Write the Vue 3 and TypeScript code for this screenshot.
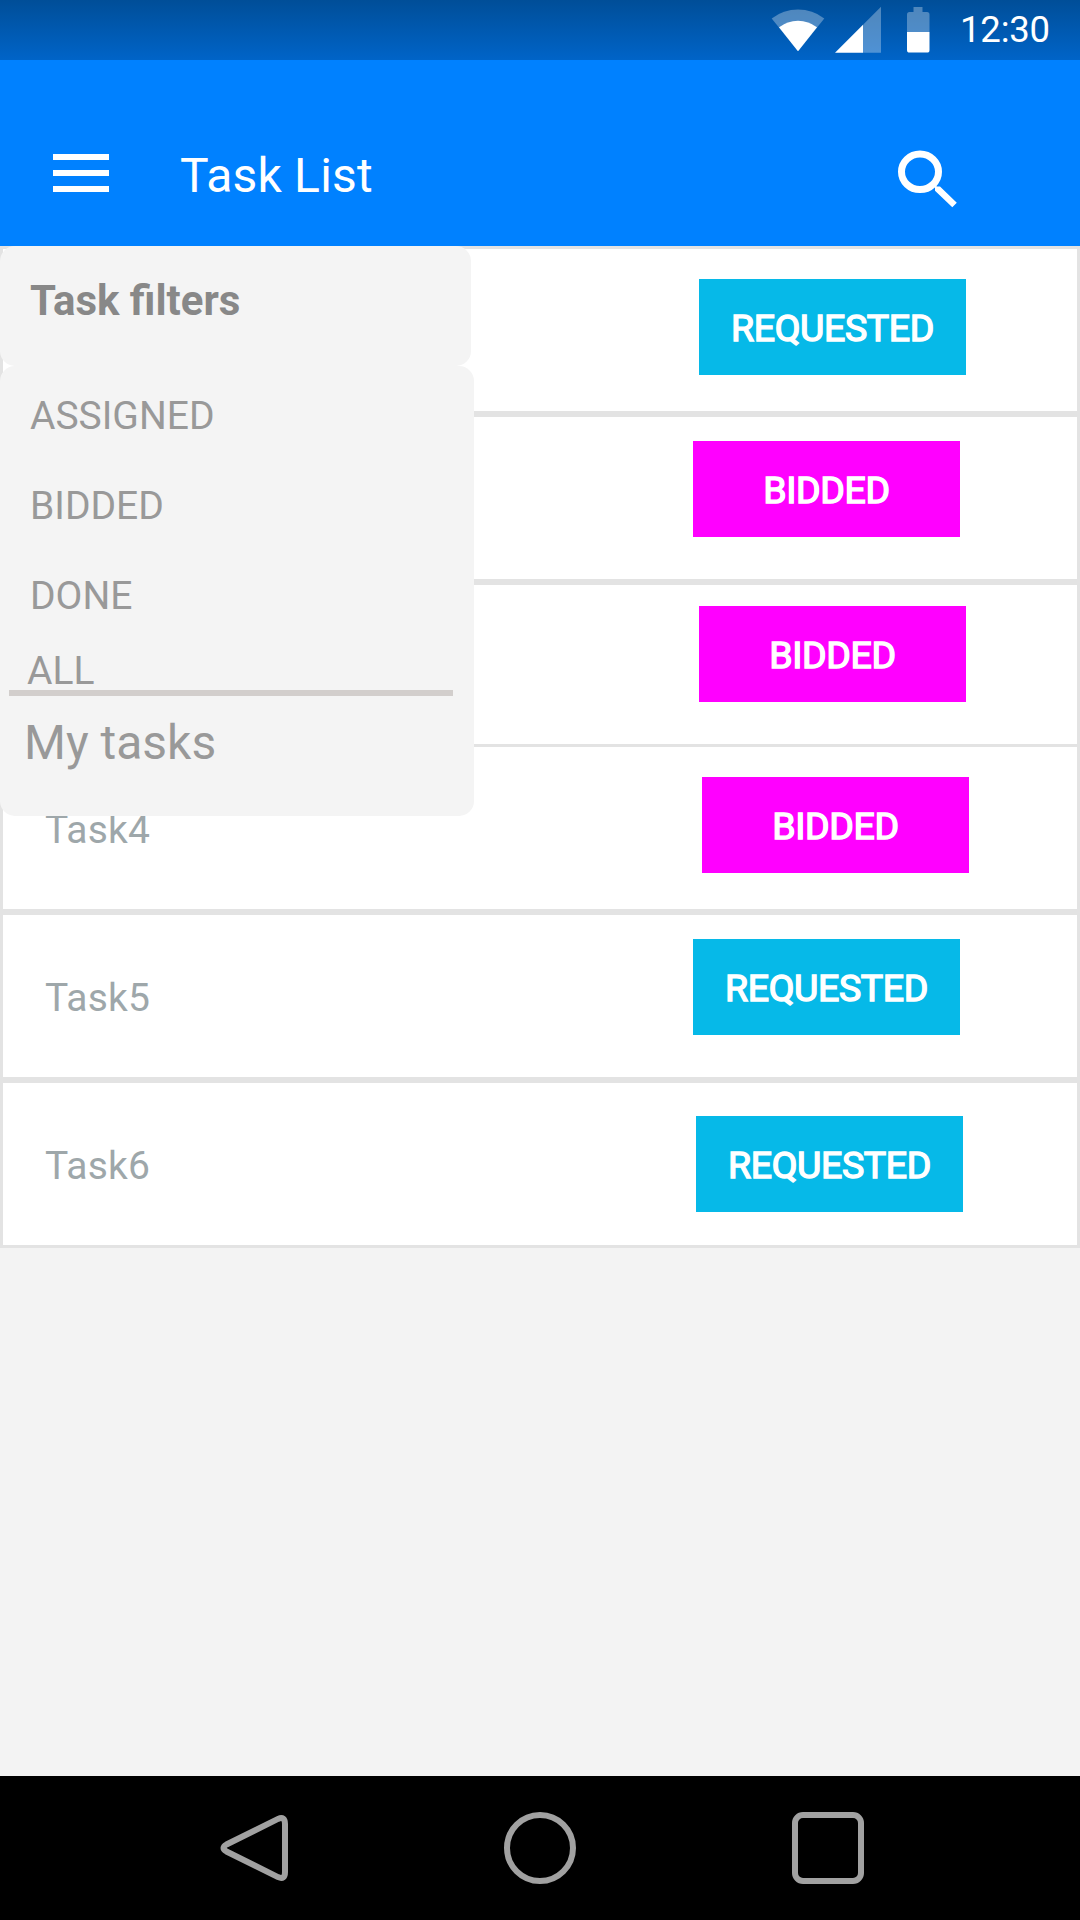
<script setup lang="ts">
type Status = 'REQUESTED' | 'BIDDED'

interface Task {
  id: number
  name?: string
  status: Status
  top: number
  right: number
}

// The first three rows sit under the open filter panel and carry no label.
const tasks: Task[] = [
  { id: 1, status: 'REQUESTED', top: 30, right: 111 },
  { id: 2, status: 'BIDDED', top: 24, right: 117 },
  { id: 3, status: 'BIDDED', top: 21, right: 111 },
  { id: 4, name: 'Task4', status: 'BIDDED', top: 30, right: 108 },
  { id: 5, name: 'Task5', status: 'REQUESTED', top: 24, right: 117 },
  { id: 6, name: 'Task6', status: 'REQUESTED', top: 33, right: 114 },
]

const filters: string[] = ['ASSIGNED', 'BIDDED', 'DONE']
</script>

<template>
  <div class="screen">
    <div class="status-bar">
      <svg class="status-icons" width="160" height="48" viewBox="771 6 160 48">
        <path d="M771.7 18.4 Q783.5 9.6 798 9.6 Q812.500 9.600 824.300 18.400 L798 51.300 Z" fill="#fff" fill-opacity=".31" />
        <path d="M779 27.300 Q787.500 20.700 798 20.700 Q808.500 20.700 817 27.300 L798 51.300 Z" fill="#fff" />
        <path d="M863 24.800 L881 6.800 V52.800 H863 Z" fill="#fff" fill-opacity=".31" />
        <path d="M835 52.800 L863 24.800 V52.800 Z" fill="#fff" />
        <path d="M907 32 V14.500 Q907 12 909.500 12 H913.500 V7 H922.500 V12 H927 Q929.500 12 929.500 14.500 V32 Z" fill="#fff" fill-opacity=".31" />
        <path d="M907 32 H929.500 V50 Q929.500 52.600 927 52.600 H909.500 Q907 52.600 907 50 Z" fill="#fff" />
      </svg>
      <span class="clock">12:30</span>
    </div>

    <header class="app-bar">
      <button class="icon-button menu-button" aria-label="Menu">
        <svg width="56" height="38" viewBox="0 0 56 38" fill="#fff">
          <rect width="56" height="6" />
          <rect y="16" width="56" height="6" />
          <rect y="32" width="56" height="6" />
        </svg>
      </button>
      <h1 class="title">Task List</h1>
      <button class="icon-button search-button" aria-label="Search">
        <svg width="60" height="58" viewBox="897 150 60 58">
          <ellipse cx="920" cy="171.800" rx="18.500" ry="17.800" fill="none" stroke="#fff" stroke-width="7" />
          <path d="M932.500 187 L936 184 L936.600 186.600 L940 186.600 L956.800 202.700 L952.300 207.200 L935 190.800 V187 Z" fill="#fff" />
        </svg>
      </button>
    </header>

    <main class="content">
      <ul class="tasks">
        <li v-for="task in tasks" :key="task.id" class="task">
          <span class="task-name">{{ task.name }}</span>
          <span
            class="badge"
            :class="task.status.toLowerCase()"
            :style="{ marginTop: `${task.top}px`, marginRight: `${task.right}px` }"
          >{{ task.status }}</span>
        </li>
      </ul>

      <aside class="drawer">
        <div class="drawer-head">Task filters</div>
        <div class="drawer-body">
          <div v-for="filter in filters" :key="filter" class="filter">{{ filter }}</div>
          <div class="filter-all">ALL</div>
          <div class="rule"></div>
          <div class="my-tasks">My tasks</div>
        </div>
      </aside>
    </main>

    <nav class="nav-bar">
      <div class="nav-item">
        <svg width="72" height="72" viewBox="0 0 72 72" class="nav-icon">
          <path d="M62 6.900 Q69 4 69 12 V60 Q69 68 62 65.100 L10.500 39.500 Q4.500 36 10.500 32.500 Z" />
        </svg>
      </div>
      <div class="nav-item">
        <svg width="72" height="72" viewBox="0 0 72 72" class="nav-icon">
          <circle cx="36" cy="36" r="33" />
        </svg>
      </div>
      <div class="nav-item">
        <svg width="72" height="72" viewBox="0 0 72 72" class="nav-icon">
          <rect x="3" y="3" width="66" height="66" rx="8" />
        </svg>
      </div>
    </nav>
  </div>
</template>

<style>
body {
  margin: 0;
  background: #f3f3f3;
}
</style>

<style scoped>
.screen {
  display: flex;
  flex-direction: column;
  width: 1080px;
  height: 1920px;
  overflow: hidden;
  background: #f3f3f3;
  font-family: Roboto, "Liberation Sans", sans-serif;
}

.screen svg {
  display: block;
}

.status-bar {
  display: flex;
  flex: none;
  height: 60px;
  padding-left: 771px;
  background: linear-gradient(#004e98, #0064c8);
}

.status-icons {
  flex: none;
  margin-top: 6px;
}

.clock {
  margin-left: 29px;
  color: #fff;
  font-size: 36.5px;
  line-height: 59px;
  letter-spacing: -0.2px;
}

.app-bar {
  display: flex;
  flex: none;
  align-items: flex-start;
  box-sizing: border-box;
  height: 186px;
  padding: 0 123px 0 53px;
  background: #0081ff;
}

.icon-button {
  flex: none;
  padding: 0;
  border: 0;
  background: none;
}

.menu-button {
  margin-top: 94px;
}

.title {
  flex: 1;
  margin: 86px 0 0 71px;
  color: #fff;
  font-size: 48px;
  font-weight: 400;
  line-height: 60px;
  letter-spacing: 0.2px;
}

.search-button {
  margin-top: 90px;
}

.content {
  position: relative;
  flex: 1;
}

.tasks {
  margin: 0;
  padding: 0;
  list-style: none;
}

.task {
  display: flex;
  align-items: flex-start;
  justify-content: space-between;
  box-sizing: border-box;
  height: 168px;
  border: 3px solid #e3e3e3;
  background: #fff;
}

.task:nth-child(3) {
  height: 162px;
  border-bottom: 0;
}

.task-name {
  padding: 2px 0 0 42px;
  color: #9ea7aa;
  font-size: 39px;
  line-height: 162px;
  letter-spacing: 0.2px;
}

.badge {
  box-sizing: border-box;
  width: 267px;
  height: 96px;
  padding-top: 2px;
  color: #fff;
  font-size: 37.5px;
  line-height: 95px;
  letter-spacing: -0.4px;
  text-align: center;
  -webkit-text-stroke: 1.4px #fff;
}

.requested {
  background: #06b9e8;
}

.bidded {
  background: #ff00ff;
}

.drawer {
  position: absolute;
  top: 0;
  left: 0;
  width: 474px;
}

.drawer-head {
  box-sizing: border-box;
  width: 471px;
  height: 120px;
  padding-left: 30px;
  border-radius: 15px;
  background: #f4f4f4;
  color: #888;
  font-size: 42px;
  font-weight: 700;
  line-height: 109px;
}

.drawer-body {
  box-sizing: border-box;
  height: 450px;
  padding-top: 5px;
  border-radius: 15px;
  background: #f4f4f4;
  color: #999;
  font-size: 39px;
}

.filter {
  padding-left: 30px;
  line-height: 90px;
}

.filter-all {
  height: 38px;
  margin-top: 11px;
  padding-left: 27px;
  line-height: 39px;
}

.rule {
  height: 6px;
  margin: 0 21px 0 9px;
  background: #d2cecc;
}

.my-tasks {
  padding-left: 24px;
  font-size: 48px;
  line-height: 93px;
}

.nav-bar {
  display: flex;
  flex: none;
  align-items: center;
  box-sizing: border-box;
  height: 144px;
  padding: 0 108px;
  background: #000;
}

.nav-item {
  display: flex;
  flex: 1;
  justify-content: center;
}

.nav-icon {
  fill: none;
  stroke: #a1a1a1;
  stroke-width: 6px;
}
</style>
